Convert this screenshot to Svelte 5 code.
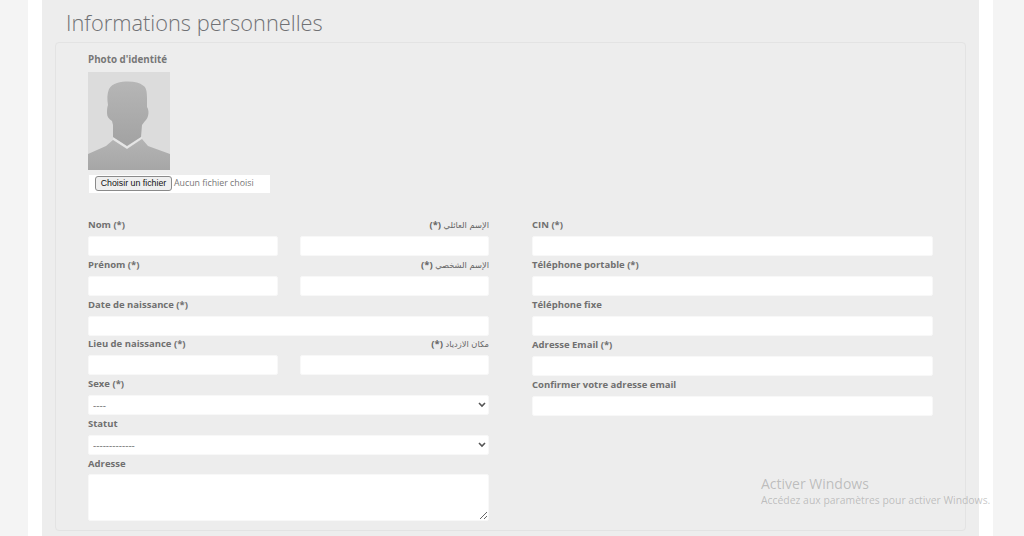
<script>
  const left = [
    { cols: [{ label: 'Nom (*)' }, { label: 'الإسم العائلي', rtl: true }] },
    { cols: [{ label: 'Prénom (*)' }, { label: 'الإسم الشخصي', rtl: true }] },
    { cols: [{ label: 'Date de naissance (*)' }] },
    { cols: [{ label: 'Lieu de naissance (*)' }, { label: 'مكان الازدياد', rtl: true }] }
  ];
  const right = ['CIN (*)', 'Téléphone portable (*)', 'Téléphone fixe', 'Adresse Email (*)', 'Confirmer votre adresse email'];
</script>

<div class="page">
  <div class="sheet">
    <main class="panel">
      <h1>Informations personnelles</h1>
      <section class="card">
        <div class="photo-block">
          <div class="lab photo-lab">Photo d'identité</div>
          <svg class="photo" viewBox="0 0 82 98" role="img" aria-label="Photo">
            <defs>
              <linearGradient id="sil" x1="0" y1="0" x2="0" y2="1">
                <stop offset="0" stop-color="#b6b6b6" />
                <stop offset="1" stop-color="#a2a2a2" />
              </linearGradient>
              <linearGradient id="bod" x1="0" y1="0" x2="0" y2="1">
                <stop offset="0" stop-color="#b4b4b4" />
                <stop offset="1" stop-color="#a6a6a6" />
              </linearGradient>
            </defs>
            <rect width="82" height="98" fill="#dcdcdc" />
            <path fill="url(#sil)" d="M20 33C19 27 19 22 21 17C24 11 33 9.500 40 9.500C47 9.500 52 11 55 13.500C58 15 59 19 59 26L59 35C60.500 37 61 41 60 44C59 47 58 48 57 49L54 53L53 65L39 74L25 65L25 53L24 49C21 47 19 45 19 41C19 38 19 36 20 33Z" />
            <path fill="url(#bod)" d="M25 68L39 77L54 67L60 74L82 82V98H0V82L18 74Z" />
            <polyline points="25,66.500 39,75.500 54,65.500" fill="none" stroke="#e6e6e6" stroke-width="1.500" />
          </svg>
          <div class="file-row">
            <button type="button" class="file-btn">Choisir un fichier</button>
            <span class="file-name">Aucun fichier choisi</span>
          </div>
        </div>

        <div class="columns">
          <div class="col">
            {#each left as row}
              <div class="row">
                {#each row.cols as c}
                  <div class="field">
                    {#if c.rtl}
                      <div class="lab rtl"><span class="ar">{c.label}</span> (*)</div>
                    {:else}
                      <div class="lab">{c.label}</div>
                    {/if}
                    <input type="text" aria-label={c.label} />
                  </div>
                {/each}
              </div>
            {/each}
            <div class="field">
              <div class="lab">Sexe (*)</div>
              <select aria-label="Sexe"><option>----</option></select>
            </div>
            <div class="field">
              <div class="lab">Statut</div>
              <select aria-label="Statut"><option>-------------</option></select>
            </div>
            <div class="field">
              <div class="lab">Adresse</div>
              <textarea aria-label="Adresse"></textarea>
            </div>
          </div>
          <div class="col wide">
            {#each right as label}
              <div class="field">
                <div class="lab">{label}</div>
                <input type="text" aria-label={label} />
              </div>
            {/each}
          </div>
        </div>
      </section>
    </main>
  </div>
  <div class="watermark">
    <div class="wm-title">Activer Windows</div>
    <div class="wm-sub">Accédez aux paramètres pour activer Windows.</div>
  </div>
</div>

<style>
  :global(body) {
    margin: 0;
    background: #f4f4f4;
    overflow: hidden;
  }
  .page {
    position: relative;
    height: 536px;
    overflow: hidden;
    padding: 0 31px 0 28px;
    font-family: "Open Sans", sans-serif;
    color: #6a6a6a;
  }
  .sheet {
    background: #fff;
    padding: 0 14px;
    height: 536px;
  }
  .panel {
    background: #ededed;
    height: 536px;
    padding: 0 13px;
    box-sizing: border-box;
    overflow: hidden;
  }
  h1 {
    margin: 0;
    height: 42px;
    padding: 8px 0 0 11px;
    box-sizing: border-box;
    font-size: 21.8px;
    line-height: 29px;
    font-weight: 300;
    color: #707174;
  }
  .card {
    border: 1px solid #e3e3e3;
    border-radius: 4px;
    height: 489px;
    box-sizing: border-box;
    padding: 9px 33px 0 32px;
  }
  .lab {
    font-size: 9.5px;
    line-height: 15px;
    height: 17px;
    font-weight: 700;
    color: #707070;
    white-space: nowrap;
  }
  .photo-lab {
    font-size: 9.8px;
    line-height: 16px;
    color: #777;
  }
  .rtl {
    text-align: right;
    direction: rtl;
    color: #666;
  }
  .ar {
    font-family: "DejaVu Sans", sans-serif;
    font-size: 8.3px;
    font-weight: 400;
  }
  .photo-block {
    height: 165px;
  }
  .photo {
    display: block;
    width: 82px;
    height: 98px;
    margin-top: 3px;
  }
  .file-row {
    display: flex;
    align-items: flex-start;
    gap: 2px;
    width: 181px;
    height: 18px;
    margin: 5px 0 0 1px;
    padding: 1px 0 0 6px;
    box-sizing: border-box;
    background: #fff;
  }
  .file-btn {
    width: 77px;
    height: 15px;
    padding: 0;
    border: 1px solid #8a8a8a;
    border-radius: 3px;
    background: #efefef;
    color: #111;
    font: 8.8px/13px "Liberation Sans", sans-serif;
  }
  .file-name {
    font-size: 8.8px;
    line-height: 15px;
    color: #777;
  }
  .columns {
    display: grid;
    grid-template-columns: 401px 401px;
    column-gap: 43px;
  }
  .row {
    display: flex;
    gap: 22px;
  }
  .row .field {
    flex: 1;
    min-width: 0;
  }
  .col {
    display: flex;
    flex-direction: column;
  }
  .field {
    height: 39.8px;
  }
  .wide .field {
    height: 40px;
  }
  input,
  select,
  textarea {
    display: block;
    width: 100%;
    box-sizing: border-box;
    border: 1px solid #f8f8f8;
    border-radius: 2px;
    background: #fff;
    outline: 0;
    margin: 2px 0 0;
    padding: 0;
  }
  input {
    height: 20px;
    padding: 0 10px;
  }
  select {
    height: 20px;
    padding: 0 4px;
    font: 10px "Open Sans", sans-serif;
    color: #777;
    appearance: none;
    background: #fff url("data:image/svg+xml,%3Csvg xmlns='http://www.w3.org/2000/svg' width='8' height='6'%3E%3Cpath d='M1 1l3 3 3-3' fill='none' stroke='%23555' stroke-width='1.6'/%3E%3C/svg%3E") no-repeat right 2px center;
  }
  textarea {
    height: 47px;
    margin-top: 1px;
    resize: vertical;
  }
  .watermark {
    position: absolute;
    left: 761px;
    top: 475px;
    white-space: nowrap;
    color: rgba(120, 120, 120, 0.42);
  }
  .wm-title {
    font-size: 14px;
    line-height: 18px;
  }
  .wm-sub {
    font-size: 10.4px;
    line-height: 15px;
  }
</style>
